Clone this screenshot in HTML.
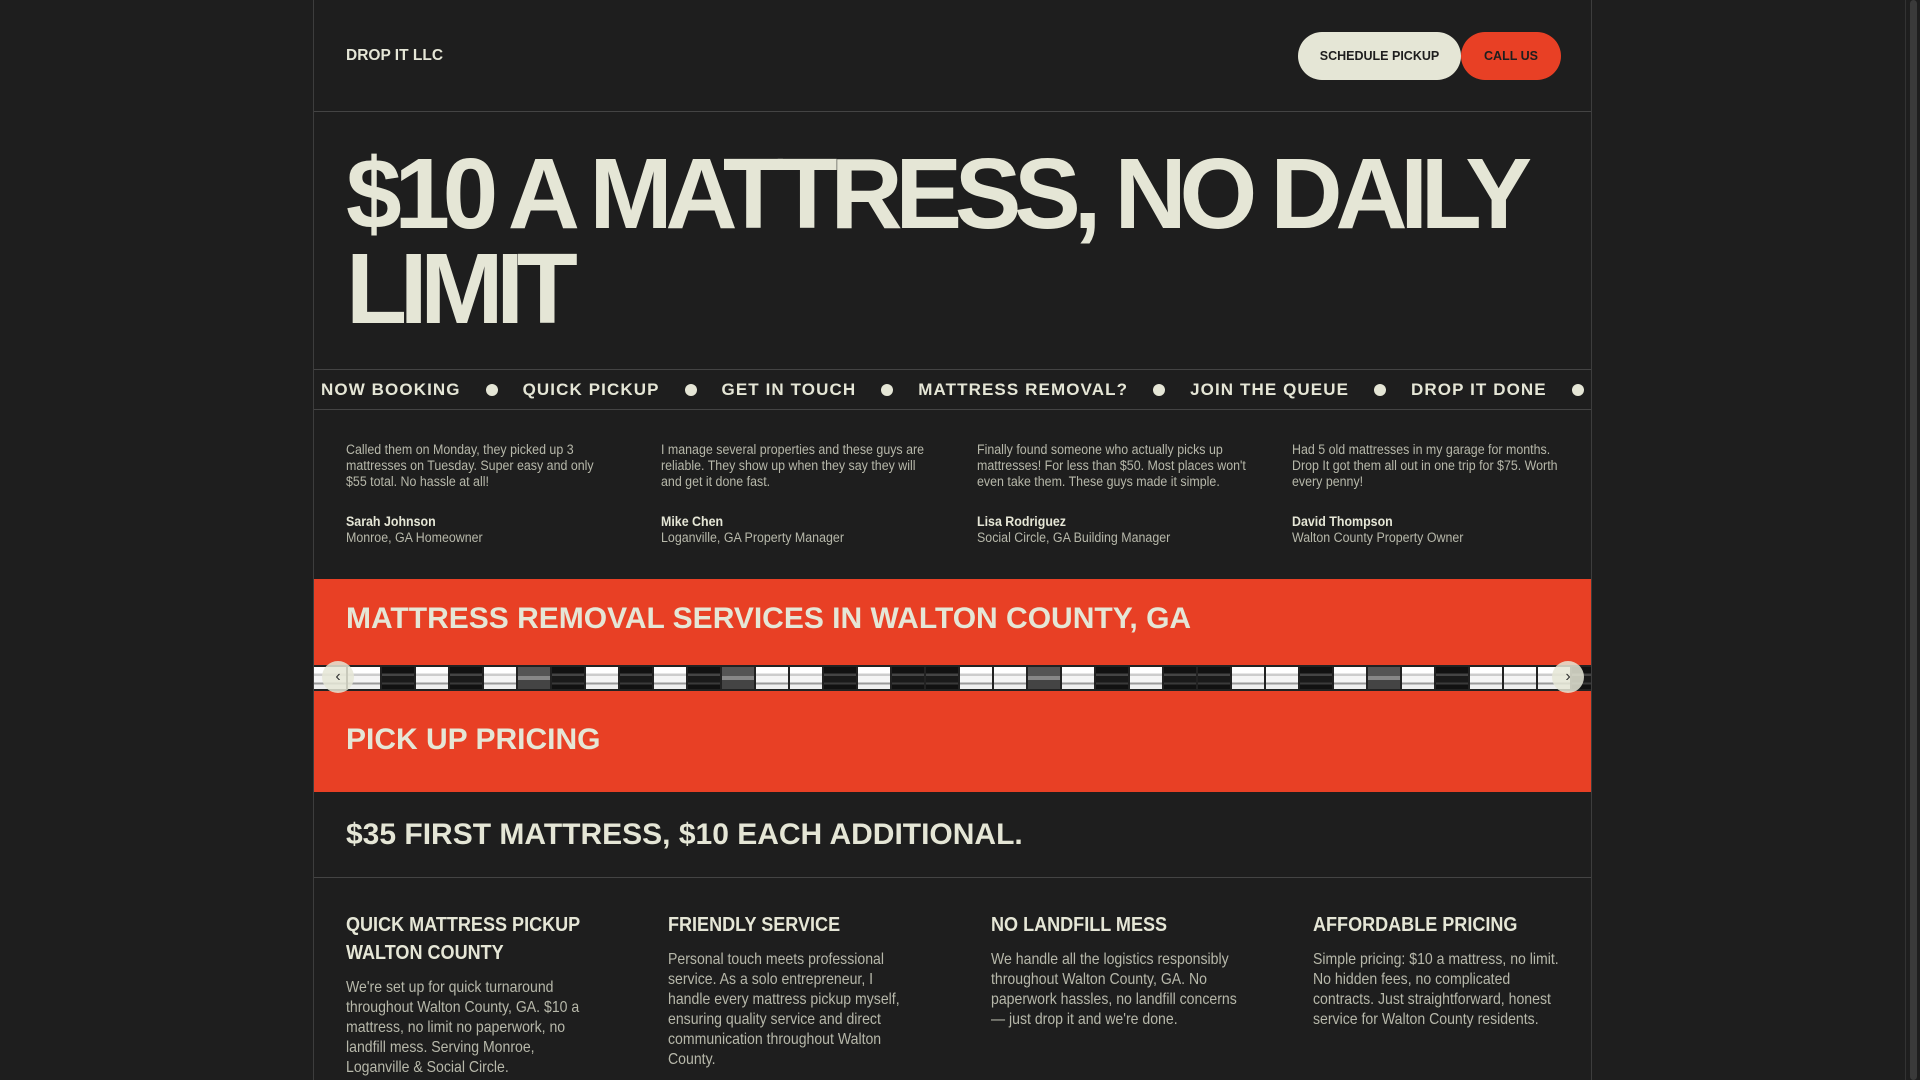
<!DOCTYPE html>
<html><head><meta charset="utf-8"><style>
*{margin:0;padding:0;box-sizing:border-box}
html,body{width:1920px;height:1080px;overflow:hidden;background:#1e1e1e;font-family:"Liberation Sans",Arial,sans-serif;color:#e5e6d6}
.sb{position:absolute;left:1905px;top:0;width:15px;height:1080px;background:#1e1e1e;border-left:1px solid #333}
.sb i{position:absolute;left:4px;top:0;width:7px;height:1080px;background:#3a3a3a;border-radius:4px}
.wrap{position:absolute;left:313px;top:0;width:1279px;height:1080px;border-left:1px solid #3d3d3d;border-right:1px solid #3d3d3d;overflow:hidden}
.hdr{height:112px;border-bottom:1px solid #444;position:relative}
.logo{position:absolute;left:32px;top:47px;font-weight:bold;font-size:15.5px}
.btn{position:absolute;top:32px;height:48px;border-radius:24px;font-weight:bold;font-size:12.5px;color:#1e1e1e;display:flex;align-items:center;justify-content:center}
.b1{left:984px;width:163px;background:#e5e6d6}
.b2{left:1147px;width:100px;background:#e84025}
.hero{height:258px;border-bottom:1px solid #444;padding:35px 0 0 32px;font-weight:bold;font-size:100px;line-height:95px;letter-spacing:-7.3px;white-space:nowrap}
.mq{height:40px;border-bottom:1px solid #444;display:flex;align-items:center;font-weight:bold;font-size:17px;letter-spacing:1.1px;white-space:nowrap;overflow:hidden;padding-left:7px}
.mq>*{flex-shrink:0}
.mq span{margin-right:25px}
.mq b{display:block;width:12px;height:12px;border-radius:50%;background:#e5e6d6;margin-right:25px}
.tst{height:169px;position:relative;font-size:13.5px}
.t{position:absolute;top:32px;width:293px;line-height:16px;color:#b7b8aa;transform:scaleX(.92);transform-origin:left top}
.t p{height:72px}
.t .n{color:#e5e6d6;font-weight:bold}
.or{background:#e84025;height:213px;position:relative}
.or h2{position:absolute;left:32px;top:23px;font-size:30px;color:#e5e6d6}
.or h3{position:absolute;left:32px;top:144px;font-size:30px;color:#e5e6d6}
.strip{position:absolute;left:0;top:86px;width:1277px;height:26px;background:#222;display:flex;gap:2px;padding:2px 0;overflow:hidden}
.strip s{flex:0 0 32px;height:22px}
.w{background:linear-gradient(#fff 0 30%,#ccc 30% 40%,#f4f4f4 40% 70%,#999 70% 80%,#eee 80%)}
.d{background:linear-gradient(#111 0 30%,#444 30% 40%,#1a1a1a 40% 70%,#3a3a3a 70% 80%,#111 80%)}
.g{background:linear-gradient(#555 0 40%,#888 40% 60%,#444 60%)}
.arr{position:absolute;top:82px;width:32px;height:32px;border-radius:50%;background:rgba(229,230,214,.85);color:#333;font-size:16px;display:flex;align-items:center;justify-content:center}
.pr{height:86px;border-bottom:1px solid #444;padding:26px 0 0 32px;font-weight:bold;font-size:30px}
.ft{position:relative}
.f{position:absolute;top:33px;width:284px;transform:scaleX(.88);transform-origin:left top}
.f h4{font-size:20.5px;line-height:28px;margin-bottom:11px}
.f p{font-size:16px;line-height:20px;color:#b7b8aa}
</style></head><body>
<div class="wrap">
<div class="hdr"><div class="logo">DROP IT LLC</div><div class="btn b1">SCHEDULE PICKUP</div><div class="btn b2">CALL US</div></div>
<div class="hero">$10 A MATTRESS, NO DAILY<br>LIMIT</div>
<div class="mq"><span>NOW BOOKING</span><b></b><span>QUICK PICKUP</span><b></b><span>GET IN TOUCH</span><b></b><span>MATTRESS REMOVAL?</span><b></b><span>JOIN THE QUEUE</span><b></b><span>DROP IT DONE</span><b></b><span>NOW BOOKING</span></div>
<div class="tst">
<div class="t" style="left:32px"><p>Called them on Monday, they picked up 3 mattresses on Tuesday. Super easy and only $55 total. No hassle at all!</p><div class="n">Sarah Johnson</div><div>Monroe, GA Homeowner</div></div>
<div class="t" style="left:347px"><p>I manage several properties and these guys are reliable. They show up when they say they will and get it done fast.</p><div class="n">Mike Chen</div><div>Loganville, GA Property Manager</div></div>
<div class="t" style="left:663px"><p>Finally found someone who actually picks up mattresses! For less than $50. Most places won't even take them. These guys made it simple.</p><div class="n">Lisa Rodriguez</div><div>Social Circle, GA Building Manager</div></div>
<div class="t" style="left:978px"><p>Had 5 old mattresses in my garage for months. Drop It got them all out in one trip for $75. Worth every penny!</p><div class="n">David Thompson</div><div>Walton County Property Owner</div></div>
</div>
<div class="or"><h2>MATTRESS REMOVAL SERVICES IN WALTON COUNTY, GA</h2>
<div class="strip"><s class="w"></s><s class="w"></s><s class="d"></s><s class="w"></s><s class="d"></s><s class="w"></s><s class="g"></s><s class="d"></s><s class="w"></s><s class="d"></s><s class="w"></s><s class="d"></s><s class="g"></s><s class="w"></s><s class="w"></s><s class="d"></s><s class="w"></s><s class="d"></s><s class="d"></s><s class="w"></s><s class="w"></s><s class="g"></s><s class="w"></s><s class="d"></s><s class="w"></s><s class="d"></s><s class="d"></s><s class="w"></s><s class="w"></s><s class="d"></s><s class="w"></s><s class="g"></s><s class="w"></s><s class="d"></s><s class="w"></s><s class="w"></s><s class="w"></s><s class="d"></s><s class="w"></s><s class="w"></s></div>
<div class="arr" style="left:8px">‹</div><div class="arr" style="left:1238px">›</div>
<h3>PICK UP PRICING</h3></div>
<div class="pr">$35 FIRST MATTRESS, $10 EACH ADDITIONAL.</div>
<div class="ft">
<div class="f" style="left:32px"><h4>QUICK MATTRESS PICKUP WALTON COUNTY</h4><p>We're set up for quick turnaround throughout Walton County, GA. $10 a mattress, no limit no paperwork, no landfill mess. Serving Monroe, Loganville &amp; Social Circle.</p></div>
<div class="f" style="left:354px"><h4>FRIENDLY SERVICE</h4><p>Personal touch meets professional service. As a solo entrepreneur, I handle every mattress pickup myself, ensuring quality service and direct communication throughout Walton County.</p></div>
<div class="f" style="left:677px"><h4>NO LANDFILL MESS</h4><p>We handle all the logistics responsibly throughout Walton County, GA. No paperwork hassles, no landfill concerns — just drop it and we're done.</p></div>
<div class="f" style="left:999px"><h4>AFFORDABLE PRICING</h4><p>Simple pricing: $10 a mattress, no limit. No hidden fees, no complicated contracts. Just straightforward, honest service for Walton County residents.</p></div>
</div>
</div>
<div class="sb"><i></i></div>
</body></html>
